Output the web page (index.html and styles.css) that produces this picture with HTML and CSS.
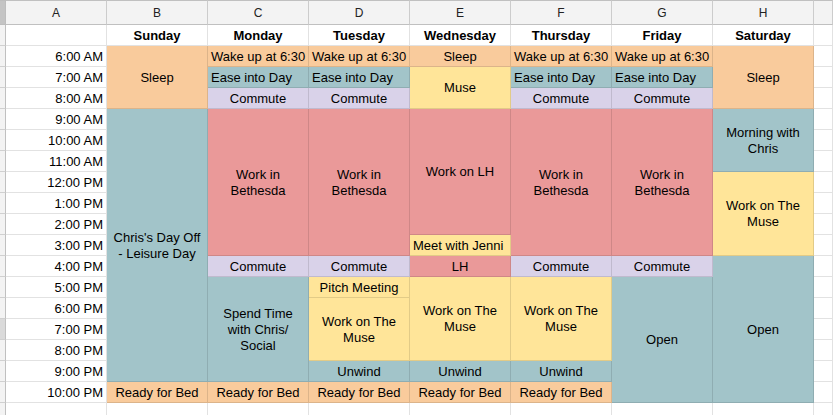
FILE: index.html
```html
<!DOCTYPE html>
<html>
<head>
<meta charset="utf-8">
<link rel="stylesheet" href="styles.css">
</head>
<body>
<div class="sheet">
  <!-- column header row -->
  <div class="corner"></div>
  <div class="colh">A</div><div class="colh">B</div><div class="colh">C</div><div class="colh">D</div><div class="colh">E</div><div class="colh">F</div><div class="colh">G</div><div class="colh">H</div><div class="colh last"></div>

  <!-- days -->
  <div class="rh"></div><div class="c"></div>
  <div class="c day">Sunday</div><div class="c day">Monday</div><div class="c day">Tuesday</div><div class="c day">Wednesday</div><div class="c day">Thursday</div><div class="c day">Friday</div><div class="c day">Saturday</div><div class="c"></div>

  <!-- 6 AM -->
  <div class="rh"></div><div class="c time">6:00 AM</div>
  <div class="c orange r3">Sleep</div>
  <div class="c orange left">Wake up at 6:30</div>
  <div class="c orange left">Wake up at 6:30</div>
  <div class="c orange">Sleep</div>
  <div class="c orange left">Wake up at 6:30</div>
  <div class="c orange left">Wake up at 6:30</div>
  <div class="c orange r3">Sleep</div>
  <div class="c"></div>

  <!-- 7 AM -->
  <div class="rh"></div><div class="c time">7:00 AM</div>
  <div class="c teal left">Ease into Day</div>
  <div class="c teal left">Ease into Day</div>
  <div class="c yellow r2">Muse</div>
  <div class="c teal left">Ease into Day</div>
  <div class="c teal left">Ease into Day</div>
  <div class="c"></div>

  <!-- 8 AM -->
  <div class="rh"></div><div class="c time">8:00 AM</div>
  <div class="c purple">Commute</div>
  <div class="c purple">Commute</div>
  <div class="c purple">Commute</div>
  <div class="c purple">Commute</div>
  <div class="c"></div>

  <!-- 9 AM -->
  <div class="rh"></div><div class="c time">9:00 AM</div>
  <div class="c teal r13">Chris's Day Off<br>- Leisure Day</div>
  <div class="c red r7">Work in<br>Bethesda</div>
  <div class="c red r7">Work in<br>Bethesda</div>
  <div class="c red r6">Work on LH</div>
  <div class="c red r7">Work in<br>Bethesda</div>
  <div class="c red r7">Work in<br>Bethesda</div>
  <div class="c teal r3">Morning with<br>Chris</div>
  <div class="c"></div>

  <!-- 10 AM -->
  <div class="rh"></div><div class="c time">10:00 AM</div><div class="c"></div>
  <!-- 11 AM -->
  <div class="rh"></div><div class="c time">11:00 AM</div><div class="c"></div>

  <!-- 12 PM -->
  <div class="rh"></div><div class="c time">12:00 PM</div>
  <div class="c yellow r4">Work on The<br>Muse</div>
  <div class="c"></div>

  <!-- 1 PM -->
  <div class="rh"></div><div class="c time">1:00 PM</div><div class="c"></div>
  <!-- 2 PM -->
  <div class="rh"></div><div class="c time">2:00 PM</div><div class="c"></div>

  <!-- 3 PM -->
  <div class="rh"></div><div class="c time">3:00 PM</div>
  <div class="c yellow left">Meet with Jenni</div>
  <div class="c"></div>

  <!-- 4 PM -->
  <div class="rh"></div><div class="c time">4:00 PM</div>
  <div class="c purple">Commute</div>
  <div class="c purple">Commute</div>
  <div class="c red">LH</div>
  <div class="c purple">Commute</div>
  <div class="c purple">Commute</div>
  <div class="c teal r7">Open</div>
  <div class="c"></div>

  <!-- 5 PM -->
  <div class="rh"></div><div class="c time">5:00 PM</div>
  <div class="c teal r5">Spend Time<br>with Chris/<br>Social</div>
  <div class="c yellow">Pitch Meeting</div>
  <div class="c yellow r4">Work on The<br>Muse</div>
  <div class="c yellow r4">Work on The<br>Muse</div>
  <div class="c teal r6">Open</div>
  <div class="c"></div>

  <!-- 6 PM -->
  <div class="rh"></div><div class="c time">6:00 PM</div>
  <div class="c yellow r3">Work on The<br>Muse</div>
  <div class="c"></div>

  <!-- 7 PM -->
  <div class="rh sel"></div><div class="c time">7:00 PM</div><div class="c"></div>
  <!-- 8 PM -->
  <div class="rh"></div><div class="c time">8:00 PM</div><div class="c"></div>

  <!-- 9 PM -->
  <div class="rh"></div><div class="c time">9:00 PM</div>
  <div class="c teal">Unwind</div>
  <div class="c teal">Unwind</div>
  <div class="c teal">Unwind</div>
  <div class="c"></div>

  <!-- 10 PM -->
  <div class="rh"></div><div class="c time">10:00 PM</div>
  <div class="c orange">Ready for Bed</div>
  <div class="c orange">Ready for Bed</div>
  <div class="c orange">Ready for Bed</div>
  <div class="c orange">Ready for Bed</div>
  <div class="c orange">Ready for Bed</div>
  <div class="c"></div>

  <!-- trailing empty row -->
  <div class="rh"></div>
  <div class="c"></div><div class="c"></div><div class="c"></div><div class="c"></div><div class="c"></div><div class="c"></div><div class="c"></div><div class="c"></div><div class="c"></div>
</div>
</body>
</html>
```

FILE: styles.css
```css
html, body {
  margin: 0;
  padding: 0;
  background: #ffffff;
  overflow: hidden;
}

.sheet {
  display: grid;
  grid-template-columns: 6px repeat(8, 101px) 1fr;
  grid-template-rows: 25px repeat(18, 21px) 21px;
  width: 833px;
  height: 415px;
  overflow: hidden;
  font-family: "Liberation Sans", Arial, sans-serif;
  font-size: 13px;
  color: #000;
}

.sheet > div {
  box-sizing: border-box;
  min-width: 0;
}

.corner {
  background: #c4c4c4;
  border-top: 1px solid #bdbdbd;
  border-right: 1px solid #bdbdbd;
  border-bottom: 1px solid #bdbdbd;
}

.colh {
  background: #f3f3f3;
  border-top: 1px solid #c0c0c0;
  border-right: 1px solid #cccccc;
  border-bottom: 1px solid #c0c0c0;
  display: flex;
  align-items: center;
  justify-content: center;
  font-size: 12px;
  color: #222;
}

.rh {
  background: #f3f3f3;
  border-right: 1px solid #c0c0c0;
  border-bottom: 1px solid #d0d0d0;
}

.rh.sel {
  background: #dadada;
}

.c {
  border-right: 1px solid rgba(0, 0, 0, 0.115);
  border-bottom: 1px solid rgba(0, 0, 0, 0.115);
  display: flex;
  align-items: center;
  justify-content: center;
  text-align: center;
  padding: 1px 3px 0 3px;
  line-height: 16px;
  white-space: nowrap;
  overflow: hidden;
}

.day { font-weight: bold; }
.time { justify-content: flex-end; }
.left { justify-content: flex-start; text-align: left; }

.orange { background: #f9cb9c; }
.teal { background: #a2c4c9; }
.purple { background: #d9d2e9; }
.red { background: #ea9999; }
.yellow { background: #ffe599; }

.r2 { grid-row: span 2; }
.r3 { grid-row: span 3; }
.r4 { grid-row: span 4; }
.r5 { grid-row: span 5; }
.r6 { grid-row: span 6; }
.r7 { grid-row: span 7; }
.r13 { grid-row: span 13; }
```
